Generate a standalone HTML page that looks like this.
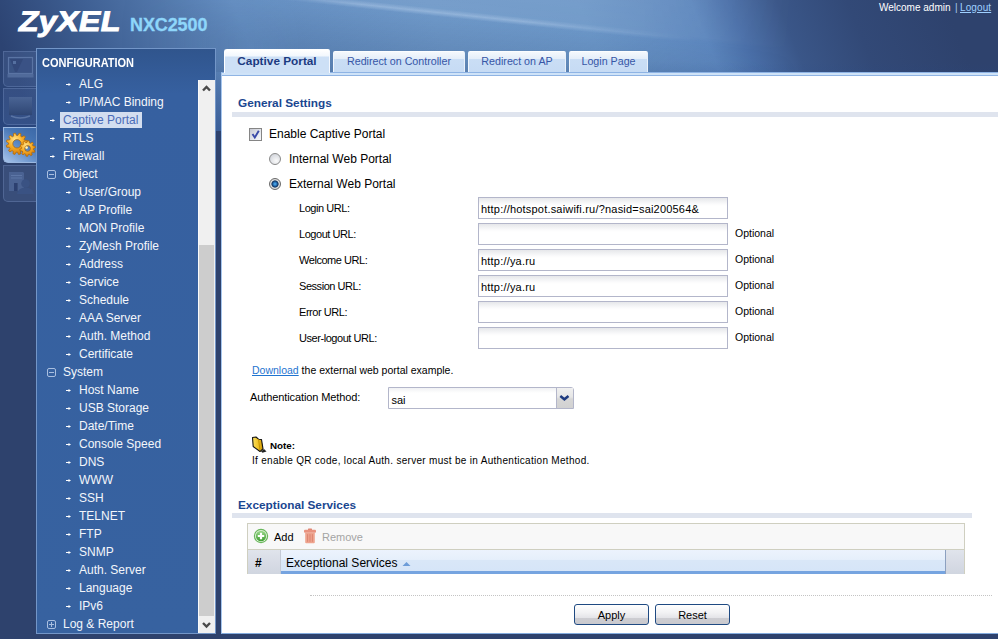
<!DOCTYPE html>
<html><head><meta charset="utf-8">
<style>
*{margin:0;padding:0;box-sizing:border-box}
html,body{width:998px;height:639px;overflow:hidden;font-family:"Liberation Sans",sans-serif;background:#2e426d;position:relative}
.abs{position:absolute}
#hdr{position:absolute;left:0;top:0;width:998px;height:200px;
 background:
  linear-gradient(180deg, rgba(46,66,109,0) 131px, rgba(46,66,109,1) 131px),
  linear-gradient(180deg, rgba(38,72,135,0) 62px, rgba(38,72,135,0.55) 131px, rgba(38,72,135,0) 131px),
  linear-gradient(68deg,#2c4372 60px,#3e5f93 150px,#6690c3 290px,#6e98c8 470px,#6b96c7 610px,#5c86bd 715px,#4a6fa8 750px,#3a5688 795px,#324977 860px,#2e426d 950px);}
#logo{left:16px;top:5px;font-size:28.5px;font-weight:bold;color:#fff;transform:skewX(-11deg) scaleX(1.13);transform-origin:0 100%;white-space:nowrap;-webkit-text-stroke:1px #fff;letter-spacing:0.3px}
#model{left:130px;top:15px;font-size:18px;font-weight:bold;color:#8ed6fa;letter-spacing:-0.1px;-webkit-text-stroke:0.3px #8ed6fa}
#welcome{left:879px;top:2px;font-size:10px;color:#fff;white-space:nowrap}
#welcome a{color:#9fd0ff;text-decoration:underline}
.tile{position:absolute;left:3px;width:33px;border-radius:0 0 0 5px;background:rgba(120,150,200,0.15);border:1px solid rgba(140,170,215,0.28);border-right:none}
#side{left:36px;top:48px;width:180px;height:586px;background:linear-gradient(#30558d 0,#3660a0 45px,#3762a0 100%);border:1px solid #7396c8;overflow:hidden}
#side h1{position:absolute;left:5px;top:8px;font-size:11px;transform:scaleY(1.1);transform-origin:0 100%;font-weight:bold;color:#fff;white-space:nowrap}
.mi{position:absolute;font-size:12px;line-height:18px;color:#f3f6fb;white-space:nowrap}
.mi.sel{color:#4a6cb8}
.selbg{position:absolute;left:60px;top:112px;width:82px;height:16px;background:#d3def0}
.ar{position:absolute;width:5px;height:3px;background:#fff;clip-path:polygon(0 33%,50% 33%,50% 0,100% 50%,50% 100%,50% 67%,0 67%)}
.bx{position:absolute;width:9px;height:9px;border:1px solid #a9bfe0;border-radius:2px}
.bx:before{content:"";position:absolute;left:1px;top:3px;width:5px;height:1px;background:#a9bfe0}
.bx.plus:after{content:"";position:absolute;left:3px;top:1px;width:1px;height:5px;background:#a9bfe0}
#sb{left:198px;top:80px;width:17px;height:553px;background:#f0f0f0;border-left:1px solid #fafafa}
#thumb{left:199px;top:245px;width:15px;height:371px;background:#cdcdcd}
#content{left:221px;top:72px;width:777px;height:562px;background:#fff;border-top:1px solid #8fb4e4;border-left:1px solid #a6c6ee;border-bottom:1px solid #84acdf;box-shadow:inset 0 2px 0 #cfe3f8,inset 0 3px 0 #8fb4e4}
.tab{position:absolute;top:51px;height:21px;font-size:10.7px;color:#3756a6;text-align:center;line-height:18px;white-space:nowrap;
 background:linear-gradient(#f4f8fd 0,#e4eef9 7px,#cadef5 7.5px,#c6dbf4 100%);border-top:1px solid #fbfdff;border-left:1px solid #f0f6fd;border-right:1px solid #e8f0fa;border-radius:2px 2px 0 0}
.tab.act{font-weight:bold;color:#1c3a80;font-size:11.8px;top:49px;height:24px;line-height:22px;border-top:1px solid #fff;border-left:1px solid #fff;border-right:1px solid #f4f8fe;background:linear-gradient(#ffffff 0,#f2f7fd 6px,#cde0f6 7px,#cde0f6 100%);border-radius:3px 2px 0 0}
.sec{position:absolute;font-size:11.8px;font-weight:bold;color:#1a4690;white-space:nowrap}
.secline{position:absolute;height:5px;background:#dfe4ee}
.lbl{position:absolute;font-size:11px;color:#000;white-space:nowrap;letter-spacing:-0.45px}
.txt{position:absolute;font-size:12px;color:#000;white-space:nowrap}
.inp{position:absolute;left:478px;width:250px;height:22px;border:1px solid #b3b6ca;background:linear-gradient(#e6e7ea 0,#fbfbfc 6px,#fff 8px);font-size:11px;letter-spacing:0.2px;padding-left:2px;padding-top:1px;line-height:21px;white-space:nowrap;color:#000}
.opt{position:absolute;left:735px;font-size:10.5px;color:#000;white-space:nowrap}
.btn{position:absolute;top:604px;height:21px;border:1px solid #1f4a82;border-radius:3px;font-size:11px;line-height:21px;text-align:center;color:#000;
 background:linear-gradient(#ffffff 0,#f2f2f4 40%,#e4e4e8 68%,#cdcdd2 70%,#c9c9ce 100%)}
#bottom{left:0;top:634px;width:998px;height:5px;background:#2e426d}
</style></head><body>
<div id="hdr"></div>
<div class="abs" style="left:0;top:0;width:998px;height:72px;background:linear-gradient(186deg, rgba(255,255,255,0.10) 0px, rgba(255,255,255,0.06) 68px, rgba(20,45,90,0) 73px, rgba(20,45,90,0.16) 120px);-webkit-mask-image:linear-gradient(90deg,transparent 120px,#000 300px,#000 640px,transparent 800px)"></div>
<div class="abs" style="left:0;top:0;width:998px;height:200px;background:linear-gradient(186deg, rgba(255,255,255,0) 67px, rgba(215,232,252,0.32) 71px, rgba(255,255,255,0) 75px);-webkit-mask-image:linear-gradient(90deg,transparent 250px,#000 360px,#000 520px,transparent 700px)"></div>
<div class="abs" id="logo">ZyXEL</div>
<div class="abs" id="model">NXC2500</div>
<div class="abs" id="welcome">Welcome admin</div><div class="abs" style="left:955px;top:2px;font-size:10px;color:#a8c8ec">|</div><div class="abs" style="left:960px;top:2px;font-size:10px;color:#9fd0ff;text-decoration:underline;letter-spacing:0.1px">Logout</div>

<div class="tile" style="top:51px;height:36px"></div>
<svg class="abs" style="left:3px;top:51px" width="33" height="36">
 <rect x="5.5" y="6.5" width="24" height="16" fill="#3a5484" stroke="#5a74a4" stroke-width="1.2"/>
 <path d="M7 8 H28 V21 H12 Z" fill="#33497a"/>
 <path d="M20 8 L14 21 H28 V8 Z" fill="#3a5285"/>
 <rect x="10" y="10" width="3" height="3" fill="#5570a0"/>
 <rect x="4.5" y="23" width="26" height="3.5" fill="#506a9a"/>
</svg>
<div class="tile" style="top:88px;height:37px"></div>
<svg class="abs" style="left:3px;top:88px" width="33" height="37">
 <defs><linearGradient id="mg" x1="0" y1="0" x2="0" y2="1"><stop offset="0" stop-color="#4a6494"/><stop offset="1" stop-color="#2f4674"/></linearGradient></defs>
 <rect x="6" y="9" width="23" height="18" fill="url(#mg)"/>
 <path d="M8 28 Q17 32 27 28" stroke="#5a74a4" stroke-width="1.5" fill="none"/>
</svg>
<div class="tile" style="top:127px;height:36px;background:linear-gradient(35deg,#a8c4ea 0%,#6f98cf 35%,#4877b5 65%,#3c68a7 100%);border-color:#9bb8e0"></div>
<svg class="abs" style="left:3px;top:127px" width="34" height="36">
 <defs><radialGradient id="gg" cx="0.4" cy="0.3" r="0.75"><stop offset="0" stop-color="#ffe48c"/><stop offset="0.45" stop-color="#f8b02a"/><stop offset="1" stop-color="#d27808"/></radialGradient></defs>
 <path fill-rule="evenodd" fill="url(#gg)" stroke="#b06400" stroke-width="0.7" d="M22.36 17.64 L24.60 18.88 L24.06 20.73 L21.50 20.58 L20.82 21.71 L22.13 23.90 L20.75 25.23 L18.61 23.82 L17.45 24.46 L17.49 27.02 L15.63 27.48 L14.48 25.19 L13.16 25.16 L11.92 27.40 L10.07 26.86 L10.22 24.30 L9.09 23.62 L6.90 24.93 L5.57 23.55 L6.98 21.41 L6.34 20.25 L3.78 20.29 L3.32 18.43 L5.61 17.28 L5.64 15.96 L3.40 14.72 L3.94 12.87 L6.50 13.02 L7.18 11.89 L5.87 9.70 L7.25 8.37 L9.39 9.78 L10.55 9.14 L10.51 6.58 L12.37 6.12 L13.52 8.41 L14.84 8.44 L16.08 6.20 L17.93 6.74 L17.78 9.30 L18.91 9.98 L21.10 8.67 L22.43 10.05 L21.02 12.19 L21.66 13.35 L24.22 13.31 L24.68 15.17 L22.39 16.32 Z M18.20 16.80 A4.2 4.2 0 1 0 9.80 16.80 A4.2 4.2 0 1 0 18.20 16.80 Z"/>
 <path fill-rule="evenodd" fill="url(#gg)" stroke="#b06400" stroke-width="0.7" d="M30.48 22.69 L32.02 23.90 L31.34 25.42 L29.41 25.08 L28.66 25.92 L29.19 27.81 L27.75 28.64 L26.39 27.23 L25.28 27.46 L24.61 29.30 L22.95 29.12 L22.68 27.18 L21.65 26.72 L20.02 27.82 L18.79 26.70 L19.71 24.97 L19.14 23.99 L17.18 23.92 L16.84 22.29 L18.60 21.43 L18.72 20.31 L17.18 19.10 L17.86 17.58 L19.79 17.92 L20.54 17.08 L20.01 15.19 L21.45 14.36 L22.81 15.77 L23.92 15.54 L24.59 13.70 L26.25 13.88 L26.52 15.82 L27.55 16.28 L29.18 15.18 L30.41 16.30 L29.49 18.03 L30.06 19.01 L32.02 19.08 L32.36 20.71 L30.60 21.57 Z M27.50 21.50 A2.9 2.9 0 1 0 21.70 21.50 A2.9 2.9 0 1 0 27.50 21.50 Z"/>
 <circle cx="23.6" cy="20.6" r="1.3" fill="#fff2b0"/>
</svg>
<div class="tile" style="top:165px;height:37px"></div>
<svg class="abs" style="left:3px;top:165px" width="33" height="37">
 <path d="M6 7 H20 L21 8 V26 H15 V18 H11 V26 H6 Z" fill="#4a6292"/>
 <path d="M8 10.5 H19 M8 13 H19" stroke="#5d76a6" stroke-width="1"/>
 <rect x="11" y="18" width="3" height="8" fill="#2c4070"/>
 <circle cx="22.5" cy="18.5" r="4.3" fill="#3a5283"/>
 <path d="M14 29 Q15 22.5 22.5 22.5 Q30 22.5 31 29 Z" fill="#3a5283"/>
</svg>

<div class="abs" id="side"><h1>CONFIGURATION</h1></div>
<div class="selbg"></div>
<div class="ar" style="left:66px;top:83px"></div><div class="mi" style="left:79px;top:75px">ALG</div>
<div class="ar" style="left:66px;top:101px"></div><div class="mi" style="left:79px;top:93px">IP/MAC Binding</div>
<div class="ar" style="left:50px;top:119px"></div><div class="mi sel" style="left:63px;top:111px">Captive Portal</div>
<div class="ar" style="left:50px;top:137px"></div><div class="mi" style="left:63px;top:129px">RTLS</div>
<div class="ar" style="left:50px;top:155px"></div><div class="mi" style="left:63px;top:147px">Firewall</div>
<div class="bx" style="left:47px;top:170px"></div><div class="mi" style="left:63px;top:165px">Object</div>
<div class="ar" style="left:66px;top:191px"></div><div class="mi" style="left:79px;top:183px">User/Group</div>
<div class="ar" style="left:66px;top:209px"></div><div class="mi" style="left:79px;top:201px">AP Profile</div>
<div class="ar" style="left:66px;top:227px"></div><div class="mi" style="left:79px;top:219px">MON Profile</div>
<div class="ar" style="left:66px;top:245px"></div><div class="mi" style="left:79px;top:237px">ZyMesh Profile</div>
<div class="ar" style="left:66px;top:263px"></div><div class="mi" style="left:79px;top:255px">Address</div>
<div class="ar" style="left:66px;top:281px"></div><div class="mi" style="left:79px;top:273px">Service</div>
<div class="ar" style="left:66px;top:299px"></div><div class="mi" style="left:79px;top:291px">Schedule</div>
<div class="ar" style="left:66px;top:317px"></div><div class="mi" style="left:79px;top:309px">AAA Server</div>
<div class="ar" style="left:66px;top:335px"></div><div class="mi" style="left:79px;top:327px">Auth. Method</div>
<div class="ar" style="left:66px;top:353px"></div><div class="mi" style="left:79px;top:345px">Certificate</div>
<div class="bx" style="left:47px;top:368px"></div><div class="mi" style="left:63px;top:363px">System</div>
<div class="ar" style="left:66px;top:389px"></div><div class="mi" style="left:79px;top:381px">Host Name</div>
<div class="ar" style="left:66px;top:407px"></div><div class="mi" style="left:79px;top:399px">USB Storage</div>
<div class="ar" style="left:66px;top:425px"></div><div class="mi" style="left:79px;top:417px">Date/Time</div>
<div class="ar" style="left:66px;top:443px"></div><div class="mi" style="left:79px;top:435px">Console Speed</div>
<div class="ar" style="left:66px;top:461px"></div><div class="mi" style="left:79px;top:453px">DNS</div>
<div class="ar" style="left:66px;top:479px"></div><div class="mi" style="left:79px;top:471px">WWW</div>
<div class="ar" style="left:66px;top:497px"></div><div class="mi" style="left:79px;top:489px">SSH</div>
<div class="ar" style="left:66px;top:515px"></div><div class="mi" style="left:79px;top:507px">TELNET</div>
<div class="ar" style="left:66px;top:533px"></div><div class="mi" style="left:79px;top:525px">FTP</div>
<div class="ar" style="left:66px;top:551px"></div><div class="mi" style="left:79px;top:543px">SNMP</div>
<div class="ar" style="left:66px;top:569px"></div><div class="mi" style="left:79px;top:561px">Auth. Server</div>
<div class="ar" style="left:66px;top:587px"></div><div class="mi" style="left:79px;top:579px">Language</div>
<div class="ar" style="left:66px;top:605px"></div><div class="mi" style="left:79px;top:597px">IPv6</div>
<div class="bx plus" style="left:47px;top:620px"></div><div class="mi" style="left:63px;top:615px">Log &amp; Report</div>
<div class="abs" id="sb"></div>
<div class="abs" id="thumb"></div>
<svg class="abs" style="left:199px;top:82px" width="15" height="13"><path d="M4 8.5 L7.5 5 L11 8.5" fill="none" stroke="#4a4a4a" stroke-width="2.4"/></svg>
<svg class="abs" style="left:199px;top:617px" width="15" height="14"><path d="M4 6 L7.5 9.5 L11 6" fill="none" stroke="#4a4a4a" stroke-width="2.4"/></svg>

<div class="abs" id="content"></div>
<div class="abs" style="left:222px;top:75px;width:776px;height:1px;background:#8fb4e4"></div>

<div class="tab act" style="left:224px;width:106px">Captive Portal</div>
<div class="tab" style="left:333px;width:132px">Redirect on Controller</div>
<div class="tab" style="left:468px;width:98px">Redirect on AP</div>
<div class="tab" style="left:569px;width:79px">Login Page</div>

<div class="sec" style="left:238px;top:96px">General Settings</div>
<div class="secline" style="left:232px;top:112px;width:766px"></div>

<div class="abs" style="left:249px;top:128px;width:13px;height:13px;border:1px solid #858585;background:linear-gradient(135deg,#c6c8d2,#eceef2 70%,#f6f6f8)"></div>
<svg class="abs" style="left:249px;top:128px" width="13" height="13"><path d="M3.5 6 L5.8 9.5 L9.8 2.8" fill="none" stroke="#3a4aa8" stroke-width="1.9"/></svg>
<div class="txt" style="left:269px;top:127px">Enable Captive Portal</div>
<div class="abs" style="left:269px;top:153px;width:12px;height:12px;border-radius:50%;border:1px solid #8a8a8a;background:radial-gradient(circle at 62% 68%,#fafafa,#c8ccd4)"></div>
<div class="txt" style="left:289px;top:152px">Internal Web Portal</div>
<div class="abs" style="left:269px;top:178px;width:12px;height:12px;border-radius:50%;border:1px solid #6a6a6a;background:radial-gradient(circle at 50% 50%,#5ab8f0 0,#2a78c0 1.6px,#10305a 3.2px,#e6e6e6 4px,#c4c4c4 6px)"></div>
<div class="txt" style="left:289px;top:177px">External Web Portal</div>

<div class="lbl" style="left:299px;top:202px">Login URL:</div>
<div class="inp" style="top:197px">http://hotspot.saiwifi.ru/?nasid=sai200564&amp;</div>
<div class="lbl" style="left:299px;top:228px">Logout URL:</div>
<div class="inp" style="top:223px"></div><div class="opt" style="top:227px">Optional</div>
<div class="lbl" style="left:299px;top:254px">Welcome URL:</div>
<div class="inp" style="top:249px">http://ya.ru</div><div class="opt" style="top:253px">Optional</div>
<div class="lbl" style="left:299px;top:280px">Session URL:</div>
<div class="inp" style="top:275px">http://ya.ru</div><div class="opt" style="top:279px">Optional</div>
<div class="lbl" style="left:299px;top:306px">Error URL:</div>
<div class="inp" style="top:301px"></div><div class="opt" style="top:305px">Optional</div>
<div class="lbl" style="left:299px;top:332px">User-logout URL:</div>
<div class="inp" style="top:327px"></div><div class="opt" style="top:331px">Optional</div>

<div class="abs" style="left:252px;top:364px;font-size:10.5px;white-space:nowrap;color:#000"><span style="color:#1f74d0;text-decoration:underline">Download</span> the external web portal example.</div>

<div class="lbl" style="left:250px;top:391px;letter-spacing:-0.1px">Authentication Method:</div>
<div class="abs" style="left:388px;top:387px;width:186px;height:22px;border:1px solid #b3b6ca;border-radius:0 3px 0 0;background:linear-gradient(#f0f1f3 0,#fff 5px)">
 <div class="abs" style="left:2.5px;top:6px;font-size:11px;color:#000">sai</div>
 <div class="abs" style="left:167px;top:0;width:17px;height:20px;border-left:1px solid #b3b6ca;background:linear-gradient(#f0f0f0 0,#e6e6e6 45%,#d6d6d6 55%,#d2d2d2 100%)">
  <svg width="16" height="20" style="position:absolute;left:0;top:0"><path d="M3.3 8 L7.4 11.3 L11.5 8" fill="none" stroke="#1f3b80" stroke-width="2.5"/></svg>
 </div>
</div>

<svg class="abs" style="left:251px;top:436px" width="17" height="18" viewBox="0 0 17 18">
 <defs><linearGradient id="ng" x1="0" y1="0" x2="1" y2="0"><stop offset="0" stop-color="#f8e060"/><stop offset="0.6" stop-color="#f0c020"/><stop offset="1" stop-color="#c89000"/></linearGradient></defs>
 <path d="M10 15.5 L13 13 L15.5 15.5 L11.5 16.8 Z" fill="#222"/>
 <path d="M1.5 1.5 L5 1 L7.5 3.2 L10.5 3.5 L12 12.8 L9 15.5 L2.2 10.5 Z" fill="url(#ng)" stroke="#111" stroke-width="1.1" stroke-linejoin="round"/>
 <path d="M7.5 3.2 L9 14.5" stroke="#b88a00" stroke-width="0.8"/>
</svg>
<div class="abs" style="left:270px;top:439.5px;font-size:9.8px;font-weight:bold;color:#000">Note:</div>
<div class="abs" style="left:252px;top:455px;font-size:10px;letter-spacing:0.3px;color:#000;white-space:nowrap">If enable QR code, local Auth. server must be in Authentication Method.</div>

<div class="sec" style="left:238px;top:498px">Exceptional Services</div>
<div class="secline" style="left:232px;top:513px;width:740px"></div>

<div class="abs" style="left:247px;top:523px;width:718px;height:51px;border:1px solid #cfcfc0;border-bottom:none;background:#f8f8f8"></div>
<div class="abs" style="left:248px;top:549px;width:716px;height:1px;background:#cfcfc0"></div>
<svg class="abs" style="left:253px;top:528px" width="16" height="16" viewBox="0 0 16 16">
 <defs><linearGradient id="ag" x1="0" y1="0" x2="0" y2="1"><stop offset="0" stop-color="#9ad88a"/><stop offset="1" stop-color="#3e9e32"/></linearGradient></defs>
 <circle cx="8" cy="8" r="7.2" fill="#6ab85c"/>
 <circle cx="8" cy="8" r="6" fill="#e8f4e4"/>
 <circle cx="8" cy="8" r="5.2" fill="url(#ag)"/>
 <path d="M8 4.8 V11.2 M4.8 8 H11.2" stroke="#fff" stroke-width="2.2"/>
</svg>
<div class="abs" style="left:274px;top:531px;font-size:11px;color:#000">Add</div>
<svg class="abs" style="left:303px;top:528px" width="14" height="16" viewBox="0 0 14 16">
 <rect x="5" y="0.5" width="4" height="1.8" rx="0.6" fill="#de8472"/>
 <rect x="1" y="1.8" width="12" height="3" rx="1" fill="#e8927e"/>
 <path d="M2.2 4.8 H11.8 V14.3 Q11.8 15.3 10.8 15.3 H3.2 Q2.2 15.3 2.2 14.3 Z" fill="#eea48e"/>
 <path d="M4.6 6.2 V13.8 M7 6.2 V13.8 M9.4 6.2 V13.8" stroke="#d9806c" stroke-width="0.9"/>
</svg>
<div class="abs" style="left:322px;top:531px;font-size:11px;color:#a4a4a4">Remove</div>

<div class="abs" style="left:248px;top:550px;width:33px;height:24px;background:linear-gradient(#e0e4ec 0,#d8dce6 50%,#d0d6e0 100%);border-right:1px solid #c4cad6"></div>
<div class="abs" style="left:255px;top:556px;font-size:12px;font-weight:bold;color:#000">#</div>
<div class="abs" style="left:281px;top:550px;width:664px;height:24px;background:linear-gradient(#ecf3fd 0,#e6effb 45%,#d9e7f8 50%,#d6e5f8 100%);border-bottom:3px solid #76a4e0"></div>
<div class="abs" style="left:945px;top:550px;width:19px;height:24px;background:linear-gradient(#e0e4ec 0,#d8dce6 50%,#d0d6e0 100%);border-left:1px solid #8ca0c0"></div>
<div class="abs" style="left:286px;top:556px;font-size:12px;color:#000;white-space:nowrap">Exceptional Services</div>
<svg class="abs" style="left:402px;top:561px" width="9" height="6"><path d="M0.5 5 L4.5 1 L8.5 5 Z" fill="#6d9cd8"/></svg>

<div class="abs" style="left:310px;top:595px;width:682px;height:1px;border-top:1px dotted #c4c4c4"></div>

<div class="btn" style="left:574px;width:75px">Apply</div>
<div class="btn" style="left:655px;width:75px">Reset</div>

<div class="abs" id="bottom"></div>
</body></html>
